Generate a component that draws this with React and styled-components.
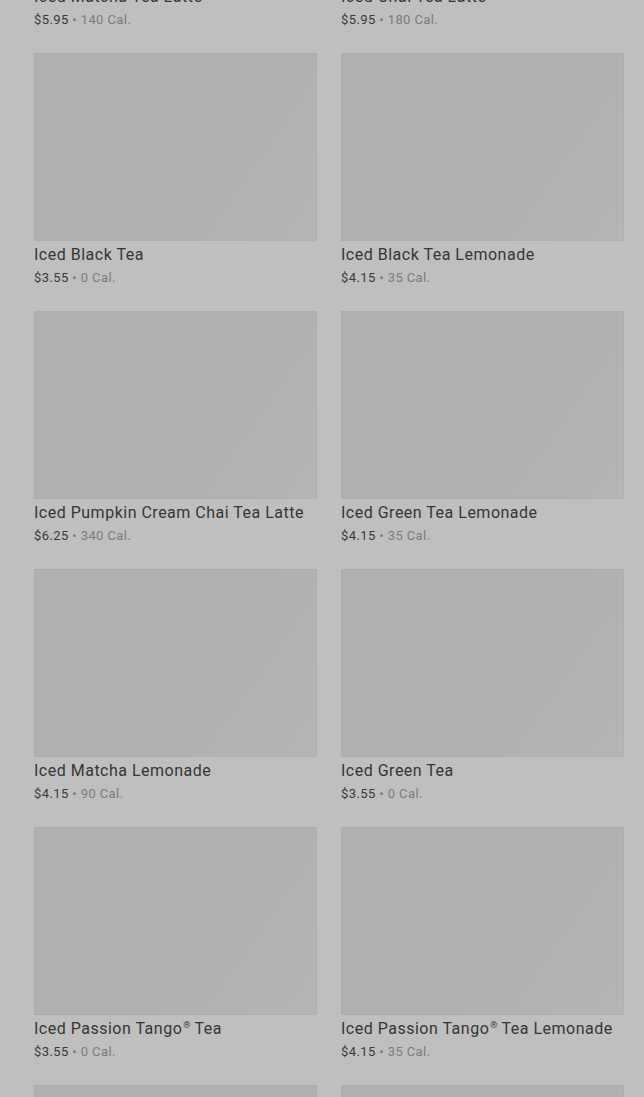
import React from "react";
import styled, { createGlobalStyle } from "styled-components";

const GlobalStyle = createGlobalStyle`
  html, body {
    margin: 0;
    padding: 0;
    background: #bfbfbf;
    font-family: Roboto, "Liberation Sans", sans-serif;
    overflow: hidden;
  }
`;

// the page is shown scrolled: first row sits partly above the fold
const Viewport = styled.div`
  height: 1097px;
  overflow: hidden;
`;

const Grid = styled.div`
  display: grid;
  grid-template-columns: 283px 283px;
  column-gap: 24px;
  row-gap: 24px;
  padding: 0 20px 0 34px;
  margin-top: -205px;
`;

const Card = styled.div`
  display: flex;
  flex-direction: column;
`;

const Thumb = styled.div`
  height: 188px;
  background: linear-gradient(125deg, #b0b0b0 0%, #b0b0b0 55%, #b5b5b5 100%);
  box-shadow: inset 0 0 0 1px rgba(0, 0, 0, 0.02);
`;

const Title = styled.div`
  margin-top: 4px;
  font-size: 16px;
  line-height: 20px;
  color: #363636;
  letter-spacing: 0.5px;
  white-space: nowrap;
`;

const Reg = styled.sup`
  font-size: 9px;
  line-height: 0;
  letter-spacing: 0;
  vertical-align: 6px;
  margin-left: 1px;
`;

const Meta = styled.div`
  margin-top: 4px;
  font-size: 13px;
  line-height: 18px;
  color: #7c7c7c;
  letter-spacing: 0.4px;
`;

const Price = styled.span`
  color: #3a3a3a;
`;

const items = [
  ["Iced Matcha Tea Latte", "$5.95", "140"],
  ["Iced Chai Tea Latte", "$5.95", "180"],
  ["Iced Black Tea", "$3.55", "0"],
  ["Iced Black Tea Lemonade", "$4.15", "35"],
  ["Iced Pumpkin Cream Chai Tea Latte", "$6.25", "340"],
  ["Iced Green Tea Lemonade", "$4.15", "35"],
  ["Iced Matcha Lemonade", "$4.15", "90"],
  ["Iced Green Tea", "$3.55", "0"],
  ["Iced Passion Tango® Tea", "$3.55", "0"],
  ["Iced Passion Tango® Tea Lemonade", "$4.15", "35"],
  ["Iced Peach Green Tea", "$4.45", "60"],
  ["Iced Peach Green Tea Lemonade", "$4.95", "90"],
];

function renderName(name) {
  const parts = name.split("®");
  if (parts.length === 1) return name;
  return (
    <>
      {parts[0]}
      <Reg>®</Reg>
      {parts[1]}
    </>
  );
}

export default function App() {
  return (
    <Viewport>
      <GlobalStyle />
      <Grid>
        {items.map(([name, price, cal]) => (
          <Card key={name}>
            <Thumb />
            <Title>{renderName(name)}</Title>
            <Meta>
              <Price>{price}</Price> • {cal} Cal.
            </Meta>
          </Card>
        ))}
      </Grid>
    </Viewport>
  );
}
